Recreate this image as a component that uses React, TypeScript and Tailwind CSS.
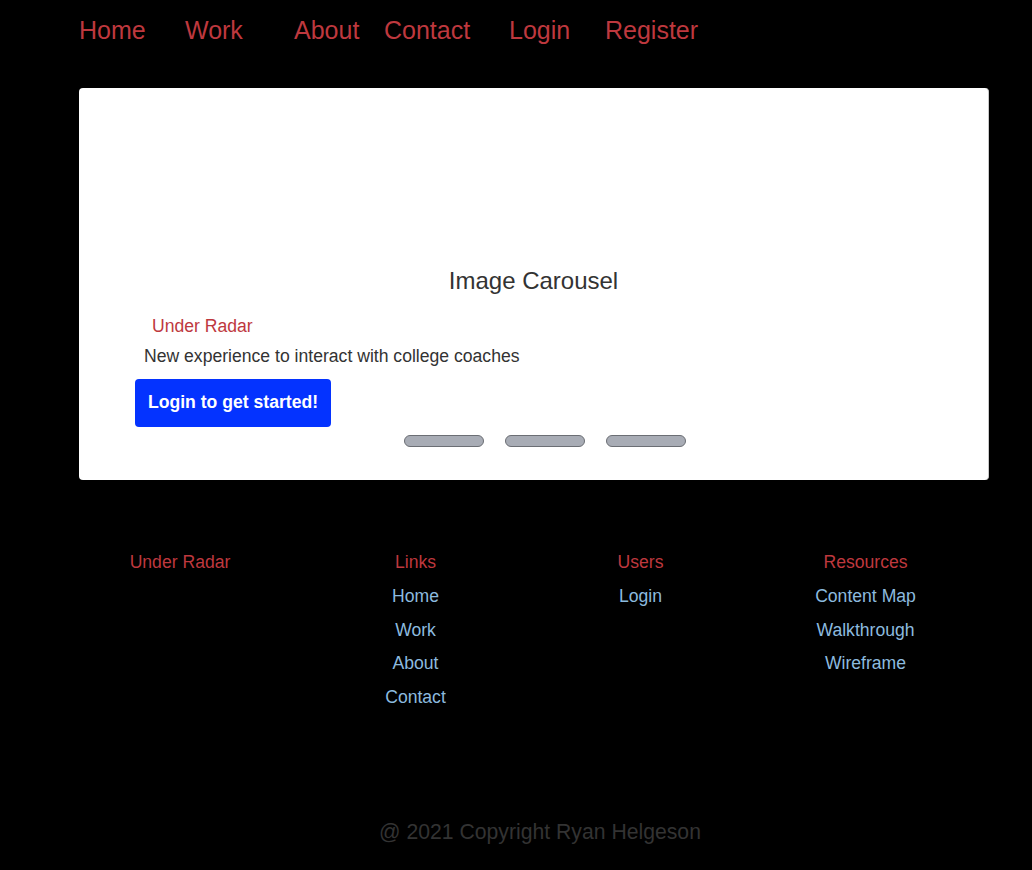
import React from "react";

const navItems: { label: string; w: string }[] = [
  { label: "Home", w: "w-[106px]" },
  { label: "Work", w: "w-[109px]" },
  { label: "About", w: "w-[90px]" },
  { label: "Contact", w: "w-[125px]" },
  { label: "Login", w: "w-[96px]" },
  { label: "Register", w: "w-auto" },
];

const footerCols: { title: string; links: string[]; extra?: string }[] = [
  { title: "Under Radar", links: [], extra: "pr-[21px]" },
  { title: "Links", links: ["Home", "Work", "About", "Contact"] },
  { title: "Users", links: ["Login"] },
  { title: "Resources", links: ["Content Map", "Walkthrough", "Wireframe"] },
];

export default function App() {
  return (
    <div
      className="min-h-[870px] w-full bg-black"
      style={{ fontFamily: '"Liberation Sans", Arial, sans-serif' }}
    >
      <nav className="flex h-[60px] items-center pl-[79px]">
        {navItems.map((n) => (
          <a
            key={n.label}
            className={`${n.w} text-[25px] leading-[28px] text-[#be383e]`}
          >
            {n.label}
          </a>
        ))}
      </nav>

      <div className="ml-[79px] mt-[28px] flex h-[392px] w-[910px] flex-col rounded-[4px] border-r border-[#c8c8c8] bg-white">
        <div className="pt-[179px] text-center text-[24px] leading-[28px] text-[#333333]">
          Image Carousel
        </div>
        <div className="mt-[20px] pl-[73px] text-[17.6px] leading-[22px] text-[#be383e]">
          Under Radar
        </div>
        <div className="mt-[8px] pl-[65px] text-[17.6px] leading-[22px] text-[#333333]">
          New experience to interact with college coaches
        </div>
        <div className="mt-[12px] pl-[56px]">
          <button className="h-[48px] w-[196px] rounded-[4px] bg-[#0433ff] pb-[2px] text-[17.6px] font-bold text-white">
            Login to get started!
          </button>
        </div>
        <div className="mt-[8px] flex justify-center gap-[21px] pl-[22px]">
          <span className="h-[12px] w-[80px] rounded-full border border-[#6b6e74] bg-[#a8acb5]" />
          <span className="h-[12px] w-[80px] rounded-full border border-[#6b6e74] bg-[#a8acb5]" />
          <span className="h-[12px] w-[80px] rounded-full border border-[#6b6e74] bg-[#a8acb5]" />
        </div>
      </div>

      <footer className="mt-[71px] flex items-start pl-[78px]">
        {footerCols.map((c) => (
          <div
            key={c.title}
            className={`flex w-[225px] flex-col items-center gap-[11.8px] ${c.extra ?? ""}`}
          >
            <div className="text-[17.6px] leading-[22px] text-[#be383e]">{c.title}</div>
            {c.links.map((l) => (
              <a key={l} className="text-[17.6px] leading-[22px] text-[#8cbadf]">
                {l}
              </a>
            ))}
          </div>
        ))}
      </footer>

      <div className="mt-[112px] w-full pl-[48px] text-center text-[21.2px] leading-[24px] text-[#333333]">
        @ 2021 Copyright Ryan Helgeson
      </div>
    </div>
  );
}
